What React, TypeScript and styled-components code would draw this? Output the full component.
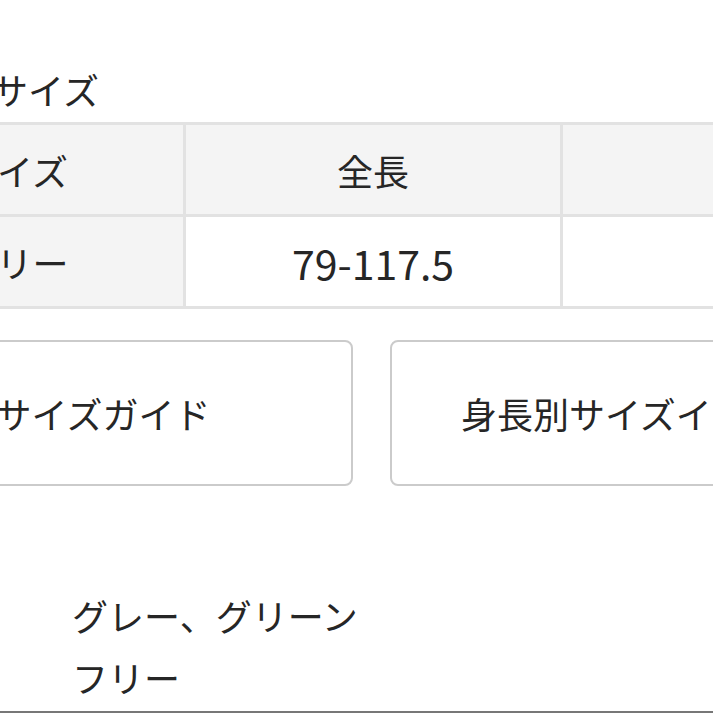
import { createGlobalStyle, styled } from "styled-components";

const GlobalStyle = createGlobalStyle`
  html, body {
    margin: 0;
    padding: 0;
    background: #fff;
    overflow: hidden;
  }

  body {
    font-family: "Noto Sans CJK JP", "Noto Sans", sans-serif;
    color: #262626;
  }
`;

const StyledPage = styled.div`
  width: 1084px;
  margin-left: -147px;
  padding-top: 64px;
`;

const StyledHeading = styled.h3`
  margin: 0 0 8px 139px;
  font-size: 36px;
  font-weight: 400;
  line-height: 50px;
`;

const StyledTable = styled.table`
  width: calc(100% + 10px);
  margin-left: -10px;
  table-layout: fixed;
  border-collapse: collapse;
  border: 3px solid #e2e2e2;
`;

const StyledHeadCell = styled.th`
  height: 89px;
  padding: 0;
  background: #f4f4f4;
  border: 3px solid #e2e2e2;
  font-size: 36px;
  font-weight: 400;
  text-align: center;
`;

const StyledCell = styled.td<{ $numeric?: boolean }>`
  height: 89px;
  padding: 0;
  background: ${({ $numeric }) => ($numeric ? "#fff" : "#f4f4f4")};
  border: 3px solid #e2e2e2;
  font-size: ${({ $numeric }) => ($numeric ? "41px" : "36px")};
  text-align: center;
`;

const StyledGuides = styled.div`
  display: flex;
  gap: 37px;
  margin-top: 31px;
`;

const StyledGuideButton = styled.button`
  display: flex;
  align-items: center;
  justify-content: center;
  width: 500px;
  height: 146px;
  padding: 0;
  background: #fff;
  border: 2px solid #cbcbcb;
  border-radius: 8px;
  font-family: inherit;
  font-size: 36px;
  color: inherit;
  white-space: nowrap;
  overflow: hidden;
`;

const StyledSpecs = styled.dl`
  display: grid;
  grid-template-columns: 219px 1fr;
  margin: 98px 0 0;
  padding-bottom: 3px;
  border-bottom: 2px solid #777;
  font-size: 36px;
  line-height: 62px;
`;

const StyledLabel = styled.dt`
  margin: 0;
`;

const StyledValue = styled.dd`
  margin: 0;
`;

const columns = [
  { key: "size", width: 340 },
  { key: "length", width: 377 },
  { key: "waist", width: 377 },
];

const App = (): JSX.Element => {
  return (
    <StyledPage>
      <GlobalStyle />
      <StyledHeading>サイズ</StyledHeading>
      <StyledTable>
        <colgroup>
          {columns.map(({ key, width }) => (
            <col key={key} style={{ width }} />
          ))}
        </colgroup>
        <thead>
          <tr>
            <StyledHeadCell>サイズ</StyledHeadCell>
            <StyledHeadCell>全長</StyledHeadCell>
            <StyledHeadCell>胴囲</StyledHeadCell>
          </tr>
        </thead>
        <tbody>
          <tr>
            <StyledCell>フリー</StyledCell>
            <StyledCell $numeric>79-117.5</StyledCell>
            <StyledCell $numeric>84</StyledCell>
          </tr>
        </tbody>
      </StyledTable>
      <StyledGuides>
        <StyledGuideButton>サイズガイド</StyledGuideButton>
        <StyledGuideButton>身長別サイズイメージ</StyledGuideButton>
      </StyledGuides>
      <StyledSpecs>
        <StyledLabel>カラー</StyledLabel>
        <StyledValue>グレー、グリーン</StyledValue>
        <StyledLabel>サイズ</StyledLabel>
        <StyledValue>フリー</StyledValue>
      </StyledSpecs>
    </StyledPage>
  );
};

export default App;
